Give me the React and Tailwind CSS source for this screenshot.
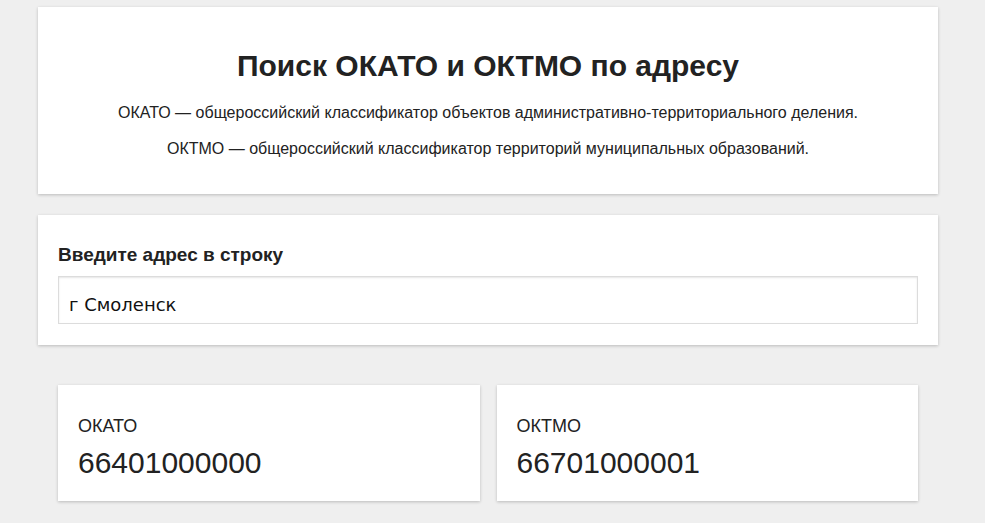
export default function App() {
  const font = { fontFamily: '"Liberation Sans", Arial, sans-serif' };
  return (
    <div className="min-h-[523px] w-full bg-[#efefef] text-[#222]" style={font}>
      <div className="ml-[38px] w-[900px] pt-[7px] pb-[22px]">
        <div className="bg-white shadow-[0_1px_3px_rgba(0,0,0,0.22)] h-[187px] flex flex-col items-center pt-[42px]">
          <h1 className="text-[30px] leading-[34px] font-bold">Поиск ОКАТО и ОКТМО по адресу</h1>
          <p className="mt-[20px] text-[16px] leading-[20px]">ОКАТО — общероссийский классификатор объектов административно-территориального деления.</p>
          <p className="mt-[16px] text-[16px] leading-[20px]">ОКТМО — общероссийский классификатор территорий муниципальных образований.</p>
        </div>
        <div className="mt-[21px] bg-white shadow-[0_1px_3px_rgba(0,0,0,0.22)] h-[130px] px-[20px] pt-[29px]">
          <div className="text-[19px] leading-[22px] font-bold">Введите адрес в строку</div>
          <div
            className="mt-[10px] h-[48px] border border-[#dcdcdc] shadow-[inset_0_1px_2px_rgba(0,0,0,0.1)] px-[10px] pt-[17px] text-[18px] leading-[21px] text-[#111]"
            style={{ fontFamily: '"DejaVu Sans", sans-serif' }}
          >
            г Смоленск
          </div>
        </div>
        <div className="mt-[40px] px-[20px] grid grid-cols-2 gap-[17px]">
          {[
            ["ОКАТО", "66401000000"],
            ["ОКТМО", "66701000001"],
          ].map(([k, v]) => (
            <div key={k} className="bg-white shadow-[0_1px_3px_rgba(0,0,0,0.22)] h-[116px] px-[20px] pt-[30px]">
              <div className="text-[18px] leading-[22px]">{k}</div>
              <div className="mt-[8px] text-[30px] leading-[36px]">{v}</div>
            </div>
          ))}
        </div>
      </div>
    </div>
  );
}
